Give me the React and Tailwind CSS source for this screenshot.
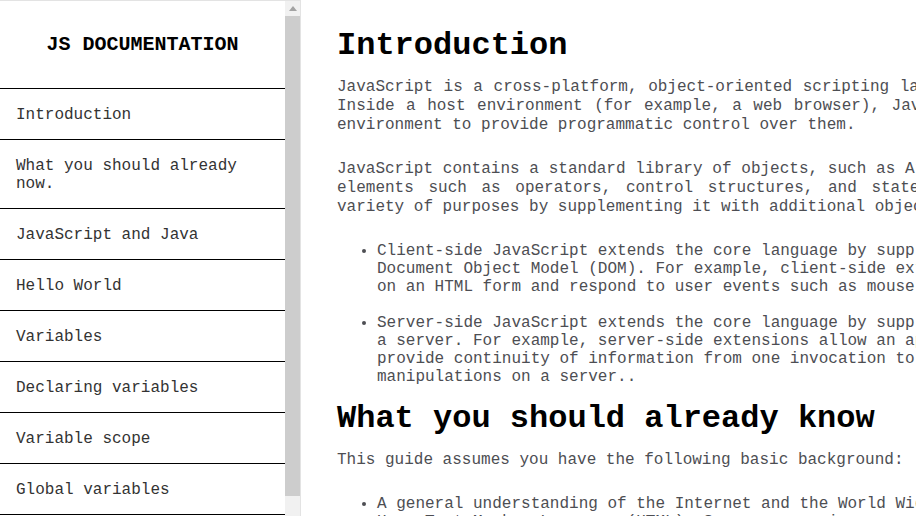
import React from "react";

const navItems = [
  "Introduction",
  "What you should already now.",
  "JavaScript and Java",
  "Hello World",
  "Variables",
  "Declaring variables",
  "Variable scope",
  "Global variables",
  "Constants",
  "Data types",
];

const App = () => {
  return (
    <div className="flex w-[916px] h-[516px] overflow-hidden bg-white font-['Liberation_Mono',monospace]">
      {/* Sidebar */}
      <nav className="flex w-[301px] shrink-0 h-full border-t border-r border-[#e3e3e3] overflow-hidden">
        <div className="w-[285px] shrink-0">
          <header className="h-[87px] flex items-center justify-center">
            <h1 className="text-[20px] font-bold text-black">JS DOCUMENTATION</h1>
          </header>
          <ul>
            {navItems.map((item) => (
              <li
                key={item}
                className="border-t border-black px-4 pt-[17px] pb-[15px] text-[16px] leading-[18px] text-[#333333]"
              >
                {item}
              </li>
            ))}
          </ul>
        </div>
        {/* Scrollbar */}
        <div className="w-[15px] shrink-0 flex flex-col bg-[#f1f1f1]">
          <div className="h-[15px] flex items-center justify-center">
            <svg width="8" height="5" viewBox="0 0 8 5">
              <path d="M0 5 L4 0 L8 5 Z" fill="#a3a3a3" />
            </svg>
          </div>
          <div className="h-[480px] bg-[#cdcdcd]" />
        </div>
      </nav>

      {/* Main */}
      <main className="shrink-0 pl-[36px] pt-[27px]">
        <div className="w-[1040px]">
          <section>
            <h2 className="text-[32px] leading-[38px] font-bold text-black">Introduction</h2>
            <p className="mt-[13px] text-[16px] leading-[19px] text-[#4d4e53] text-justify">
              JavaScript is a cross-platform, object-oriented scripting language. It is a small and lightweight language. Inside a host environment (for example, a web browser), JavaScript can be connected to the objects of its environment to provide programmatic control over them.
            </p>
            <p className="mt-[25px] text-[16px] leading-[19px] text-[#4d4e53] text-justify">
              JavaScript contains a standard library of objects, such as Array, Date, and Math, and a core set of language elements such as operators, control structures, and statements. Core JavaScript can be extended for a variety of purposes by supplementing it with additional objects; for example:
            </p>
            <ul className="mt-[25px] pl-[40px] list-disc text-[16px] leading-[18px] text-[#4d4e53]">
              <li>
                Client-side JavaScript extends the core language by supplying objects to control a browser and its Document Object Model (DOM). For example, client-side extensions allow an application to place elements on an HTML form and respond to user events such as mouse clicks, form input, and page navigation.
              </li>
              <li className="mt-[18px]">
                Server-side JavaScript extends the core language by supplying objects relevant to running JavaScript on a server. For example, server-side extensions allow an application to communicate with a database, provide continuity of information from one invocation to another of the application, or perform file manipulations on a server..
              </li>
            </ul>
          </section>
          <section>
            <h2 className="mt-[14px] text-[32px] leading-[38px] font-bold text-black">What you should already know</h2>
            <p className="mt-[13px] text-[16px] leading-[19px] text-[#4d4e53]">
              This guide assumes you have the following basic background:
            </p>
            <ul className="mt-[25px] pl-[40px] list-disc text-[16px] leading-[18px] text-[#4d4e53]">
              <li>
                A general understanding of the Internet and the World Wide Web (WWW). Good working knowledge of HyperText Markup Language (HTML). Some programming experience.
              </li>
            </ul>
          </section>
        </div>
      </main>
    </div>
  );
};

export default App;
